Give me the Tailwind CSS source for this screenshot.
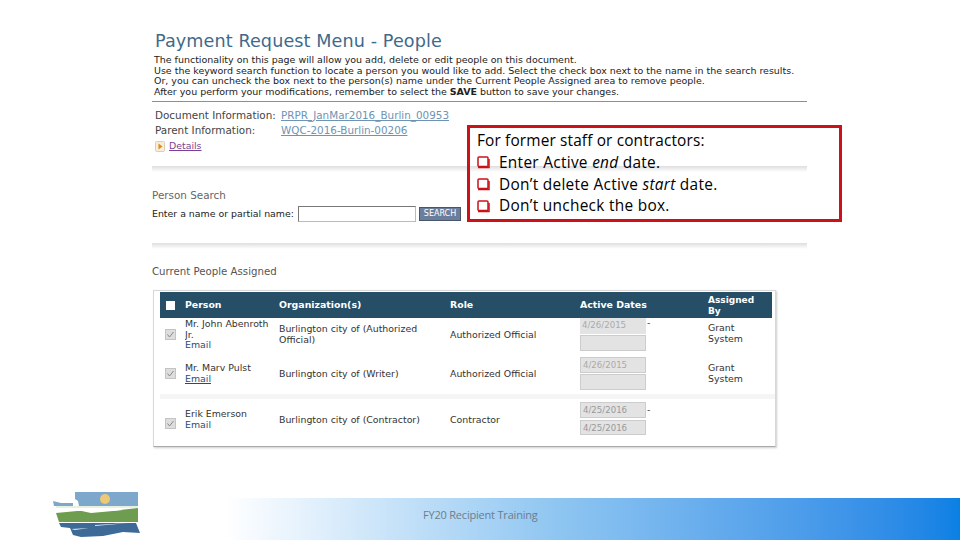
<!DOCTYPE html>
<html lang="en">
<head>
  <meta charset="UTF-8" />
  <title>Payment Request Menu - People</title>
  <script src="https://cdn.jsdelivr.net/npm/@tailwindcss/browser@4"></script>
</head>
<body class="bg-white font-['DejaVu_Sans',sans-serif] text-[#222] h-[540px] w-[960px] overflow-hidden relative flex flex-col">
  <main class="h-[498px] pl-[152px] pt-[30px] w-[807px] shrink-0">
    <h1 class="text-[17.6px] leading-[22px] pl-[3px] text-[#3f6a8a] tracking-[0.1px]">Payment Request Menu - People</h1>
    <div class="pl-[2px] pt-[3px] text-[9.47px] leading-[10.6px] h-[50px] border-b border-[#8f8f8f] whitespace-nowrap">
      <p>The functionality on this page will allow you add, delete or edit people on this document.</p>
      <p>Use the keyword search function to locate a person you would like to add. Select the check box next to the name in the search results.</p>
      <p>Or, you can uncheck the box next to the person(s) name under the Current People Assigned area to remove people.</p>
      <p>After you perform your modifications, remember to select the <b>SAVE</b> button to save your changes.</p>
    </div>
    <div class="pl-[3px] pt-[7px] text-[10.4px] text-[#444] h-[64px]">
      <div class="flex h-[15px] leading-[13px]"><span class="w-[126px]">Document Information:</span><a class="text-[#6f93b3] underline">PRPR_JanMar2016_Burlin_00953</a></div>
      <div class="flex h-[16px] leading-[13px]"><span class="w-[126px]">Parent Information:</span><a class="text-[#6f93b3] underline">WQC-2016-Burlin-00206</a></div>
      <div class="flex items-center gap-[4px] h-[13px] text-[9.4px]">
        <svg width="10" height="11" viewBox="0 0 10 11"><rect x="0.5" y="0.5" width="9" height="10" rx="1" fill="#f6eed8" stroke="#d9cfb8"/><path d="M3.5 2.5 7.5 5.5 3.5 8.5Z" fill="#e08a10"/></svg>
        <a class="text-[#7a3f96] underline">Details</a>
      </div>
    </div>
    <div class="h-[6px] bg-gradient-to-b from-[#dedede] to-white"></div>
    <p class="pt-[16px] text-[10.4px] leading-[14px] text-[#666]">Person Search</p>
    <div class="flex items-center h-[16px] mt-[4px] text-[9.4px] whitespace-nowrap">
      <span class="w-[146px]">Enter a name or partial name:</span>
      <span class="w-[118px] h-[16px] border border-[#777] border-r-[#bbb] border-b-[#bbb] bg-white"></span>
      <span class="ml-[3px] w-[42px] h-[14px] bg-[#6b7f9c] border border-[#46566e] text-white text-[8px] leading-[12px] text-center">SEARCH</span>
    </div>
    <div class="h-[6px] mt-[21px] bg-gradient-to-b from-[#dedede] to-white"></div>
    <p class="pt-[16px] text-[10.2px] leading-[14px] text-[#555]">Current People Assigned</p>
    <section class="mt-[11px] ml-px w-[623px] h-[157px] border border-[#d8d8d8] border-b-[#aaa] shadow-[1px_1px_2px_#ccc] pt-px text-[9.4px] text-[#333]">
      <div class="ml-[6px] w-[612px] h-[26px] bg-[#264e66] text-white font-bold flex items-center pt-px">
        <span class="w-[25px] pl-[6px]"><span class="block w-[9px] h-[9px] bg-white"></span></span>
        <span class="w-[94px]">Person</span>
        <span class="w-[171px]">Organization(s)</span>
        <span class="w-[130px]">Role</span>
        <span class="w-[128px]">Active Dates</span>
        <span class="w-[64px] leading-[11px] text-[9px]">Assigned<br />By</span>
      </div>

      <div class="ml-[6px] h-[37px] flex leading-[10.5px]">
        <span class="w-[25px] pl-[5px] pt-[11px]"><svg width="11" height="11" viewBox="0 0 11 11"><rect x="0.5" y="0.5" width="10" height="10" fill="#ddd" stroke="#c4c4c4"/><path d="M2.5 5.500 4.500 8 8.500 3" fill="none" stroke="#8a8a8a"/></svg></span>
        <span class="w-[94px] pt-px whitespace-nowrap overflow-hidden">Mr. John Abenroth<br />Jr.<br /><a class="text-[#1f4e78]">Email</a></span>
        <span class="w-[171px] pt-[6px]">Burlington city of (Authorized<br />Official)</span>
        <span class="w-[130px] pt-[12px]">Authorized Official</span>
        <span class="w-[128px] flex"><span class="flex flex-col gap-[1px]"><span class="w-[66px] h-[16px] bg-[#e3e3e3] text-[#aaa] text-[8.6px] leading-[14px] pl-[2px]">4/26/2015</span><span class="w-[66px] h-[16px] bg-[#e3e3e3] border border-[#ccc]"></span></span><span class="pl-px">-</span></span>
        <span class="w-[64px] pt-[5px]">Grant<br />System</span>
      </div>

      <div class="ml-[6px] h-[39px] flex leading-[10.5px]">
        <span class="w-[25px] pl-[5px] pt-[13px]"><svg width="11" height="11" viewBox="0 0 11 11"><rect x="0.5" y="0.5" width="10" height="10" fill="#ddd" stroke="#c4c4c4"/><path d="M2.500 5.500 4.500 8 8.500 3" fill="none" stroke="#8a8a8a"/></svg></span>
        <span class="w-[94px] pt-[8px] whitespace-nowrap">Mr. Marv Pulst<br /><a class="text-[#1f4e78] underline">Email</a></span>
        <span class="w-[171px] pt-[14px]">Burlington city of (Writer)</span>
        <span class="w-[130px] pt-[14px]">Authorized Official</span>
        <span class="w-[128px] flex flex-col gap-[1px] pt-[2px]"><span class="w-[66px] h-[16px] bg-[#e3e3e3] border border-[#ccc] text-[#aaa] text-[8.6px] leading-[14px] pl-[2px]">4/26/2015</span><span class="w-[66px] h-[16px] bg-[#e3e3e3] border border-[#ccc]"></span></span>
        <span class="w-[64px] pt-[8px]">Grant<br />System</span>
      </div>

      <div class="ml-[6px] h-[5px] bg-[#f5f5f5]"></div>

      <div class="ml-[6px] h-[37px] flex leading-[10.5px]">
        <span class="w-[25px] pl-[5px] pt-[19px]"><svg width="11" height="11" viewBox="0 0 11 11"><rect x="0.5" y="0.5" width="10" height="10" fill="#ddd" stroke="#c4c4c4"/><path d="M2.500 5.500 4.500 8 8.500 3" fill="none" stroke="#8a8a8a"/></svg></span>
        <span class="w-[94px] pt-[10px] whitespace-nowrap">Erik Emerson<br /><a class="text-[#1f4e78]">Email</a></span>
        <span class="w-[171px] pt-[16px]">Burlington city of (Contractor)</span>
        <span class="w-[130px] pt-[16px]">Contractor</span>
        <span class="w-[128px] flex pt-[3px]"><span class="flex flex-col gap-[2px]"><span class="w-[66px] h-[16px] bg-[#e3e3e3] border border-[#ccc] text-[#999] text-[8.6px] leading-[14px] pl-[2px]">4/25/2016</span><span class="w-[66px] h-[15px] bg-[#e3e3e3] border border-[#ccc] text-[#999] text-[8.6px] leading-[14px] pl-[2px]">4/25/2016</span></span><span class="pl-px pt-[3px]">-</span></span>
      </div>
    </section>
  </main>

  <footer class="h-[42px] flex">
    <div class="w-[225px] relative">
      <svg class="absolute left-[51px] -top-[8px]" width="90" height="48" viewBox="0 0 90 48">
        <path d="M24 2H87V16H28L27 11 24 9Z" fill="#7ea7cc"/>
        <path d="M2 11 10 13 22 13V16H3Z" fill="#7ea7cc"/>
        <circle cx="54" cy="9" r="5" fill="#ecc877"/>
        <path d="M5 16.500H87V17.500H5Z" fill="#cfe3bd"/>
        <path d="M5 23 26 21 60 21 87 18V32H8Z" fill="#6f9d50"/>
        <path d="M26 20 40 23 62 21 72 20 60 19 26 19Z" fill="#fff"/>
        <path d="M8 33H85L89 43 72 42 52 46 30 47 22 45 19 38 10 37Z" fill="#3d6a96"/>
        <path d="M44 35 78 33 44 36Z M20 39 38 38 24 40Z" fill="#dce8f2"/>
      </svg>
    </div>
    <div class="flex-1 bg-gradient-to-r from-white via-[#8fc6f1] via-[45%] to-[#0a80e4] pl-[198px] pt-[8px]">
      <span class="font-['Open_Sans',sans-serif] text-[11px] tracking-[-0.2px] text-[#6c7d8e] relative -top-[4px]">FY20 Recipient Training</span>
    </div>
  </footer>

  <aside class="absolute left-[467px] top-[125px] w-[375px] h-[97px] border-[3px] border-[#cc1119] pl-[7px] pt-[2px] font-['Open_Sans',sans-serif] text-[15.4px] leading-[21.800px] text-black">
    <p class="tracking-[0.15px]">For former staff or contractors:</p>
    <p class="flex items-center gap-[9px] tracking-[0.3px]"><svg width="13" height="13" viewBox="0 0 13 13"><rect x="1" y="1" width="10" height="9.500" rx="1" fill="none" stroke="#cc1119" stroke-width="1.500"/><path d="M1 11.500H12V3" fill="none" stroke="#cc1119" stroke-width="1.500"/></svg><span>Enter Active <i>end</i> date.</span></p>
    <p class="flex items-center gap-[9px] tracking-[0.3px]"><svg width="13" height="13" viewBox="0 0 13 13"><rect x="1" y="1" width="10" height="9.500" rx="1" fill="none" stroke="#cc1119" stroke-width="1.500"/><path d="M1 11.500H12V3" fill="none" stroke="#cc1119" stroke-width="1.500"/></svg><span>Don’t delete Active <i>start</i> date.</span></p>
    <p class="flex items-center gap-[9px] tracking-[0.3px]"><svg width="13" height="13" viewBox="0 0 13 13"><rect x="1" y="1" width="10" height="9.500" rx="1" fill="none" stroke="#cc1119" stroke-width="1.500"/><path d="M1 11.500H12V3" fill="none" stroke="#cc1119" stroke-width="1.500"/></svg><span>Don’t uncheck the box.</span></p>
  </aside>
</body>
</html>
